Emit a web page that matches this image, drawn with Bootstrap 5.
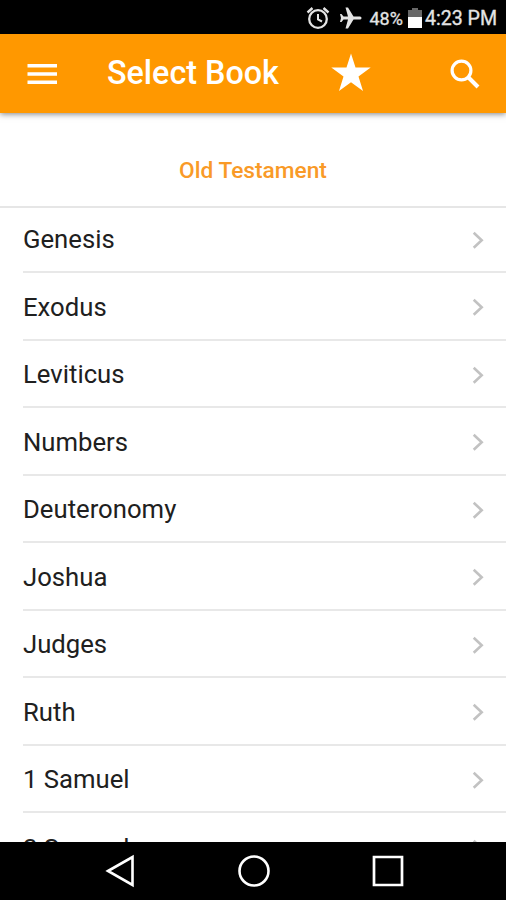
<!DOCTYPE html>
<html lang="en">
<head>
<meta charset="utf-8">
<meta name="viewport" content="width=device-width, initial-scale=1">
<title>Select Book</title>
<link href="https://cdn.jsdelivr.net/npm/bootstrap@5.3.0/dist/css/bootstrap.min.css" rel="stylesheet">
<style>
body{font-family:Roboto,"Liberation Sans",sans-serif;color:#202020;background:#fff}
svg{display:block;flex:none}
.screen{height:900px;width:506px}
.statusbar{height:34px;background:#000;color:#e4e4e4;padding:2px 9px 0 0;line-height:1}
.pct{font-size:18px;margin:1px 5px 0 7px;-webkit-text-stroke:.3px}
.clock{font-size:19.6px;margin:1px 0 0 3px;-webkit-text-stroke:.3px}
.appbar{height:79px;background:#ff9800;box-shadow:0 1px 6px rgba(0,0,0,.5);z-index:1;padding:0 26px 0 27px}
.appbar h1{font-size:32.3px;font-weight:500;margin:0 0 0 49px;width:224px;line-height:1}
.star{margin-top:-3px}
.section-head{height:95px;padding-top:24px;border-bottom:2px solid #e6e6e6;color:#f99a27;font-size:22.7px;font-weight:500}
.books{margin-top:-2.5px}
.books>.book{height:67.5px;margin-left:23px;padding:3px 21px 0 0;border:0;border-bottom:2px solid #e8e8e8;border-radius:0;font-size:25.7px;background:none;color:inherit}
.sysnav{height:58px;background:#000;padding:0 102px 0 105px}
</style>
<script src="https://cdn.jsdelivr.net/npm/bootstrap@5.3.0/dist/js/bootstrap.bundle.min.js"></script>
</head>
<body>
<svg class="d-none"><symbol id="chev" viewBox="0 0 13 18"><path d="M1.700 1.700 9.700 9.200 1.700 16.700" fill="none" stroke="#c2c2c2" stroke-width="2.600"/></symbol></svg>
<div class="screen d-flex flex-column overflow-hidden">
  <div class="statusbar d-flex align-items-center justify-content-end flex-shrink-0">
    <svg width="24" height="24" viewBox="0 0 24 24" fill="none" stroke="#e4e4e4"><circle cx="12" cy="13" r="8.800" stroke-width="2.300"/><path d="M1.500 6.500 6.500 2M22.500 6.500 17.500 2" stroke-width="2.400"/><path d="M12 8v5.500l4 2" stroke-width="2"/></svg>
    <svg class="ms-2" width="24" height="22" viewBox="0 0 24 22"><path d="M23.500 11c0-1-1-1.500-2-1.500h-6L10 .5H7.500l2.500 9H5.500L3.500 7H2l1 4-1 4h1.500l2-2.500H10l-2.500 9H10l5.500-9h6c1 0 2-.5 2-1.500z" fill="#e4e4e4"/></svg>
    <span class="pct">48%</span>
    <svg width="14" height="21" viewBox="0 0 14 21"><path d="M4 0h6v2h4v8H0V2h4z" fill="#686868"/><path d="M0 9h14v11H0z" fill="#fff"/></svg>
    <span class="clock">4:23 PM</span>
  </div>
  <nav class="appbar d-flex align-items-center text-white flex-shrink-0 position-relative">
    <svg width="31" height="22" viewBox="0 0 31 22"><path d="M.5 2.700h29.500M.5 11h29.500M.5 19.200h29.500" stroke="#fff" stroke-width="3.500"/></svg>
    <h1 class="text-nowrap">Select Book</h1>
    <svg class="star" width="40" height="40" viewBox="0 0 40 40"><path d="M20 1.500 24.500 15.500H39.700L27.500 24.500 32 39 20 30.200 8 39l4.500-14.500L.3 15.500h15.200z" fill="#fff"/></svg>
    <svg class="ms-auto" width="30" height="30" viewBox="0 0 30 30" fill="none" stroke="#fff"><circle cx="11.500" cy="11.500" r="9.400" stroke-width="3.200"/><path d="m18 18 10 10" stroke-width="4"/></svg>
  </nav>
  <div class="section-head d-flex align-items-center justify-content-center flex-shrink-0">Old Testament</div>
  <div class="books list-group list-group-flush flex-grow-1 overflow-hidden">
    <div class="book list-group-item d-flex align-items-center justify-content-between flex-shrink-0">Genesis<svg width="13" height="18"><use href="#chev"/></svg></div>
    <div class="book list-group-item d-flex align-items-center justify-content-between flex-shrink-0">Exodus<svg width="13" height="18"><use href="#chev"/></svg></div>
    <div class="book list-group-item d-flex align-items-center justify-content-between flex-shrink-0">Leviticus<svg width="13" height="18"><use href="#chev"/></svg></div>
    <div class="book list-group-item d-flex align-items-center justify-content-between flex-shrink-0">Numbers<svg width="13" height="18"><use href="#chev"/></svg></div>
    <div class="book list-group-item d-flex align-items-center justify-content-between flex-shrink-0">Deuteronomy<svg width="13" height="18"><use href="#chev"/></svg></div>
    <div class="book list-group-item d-flex align-items-center justify-content-between flex-shrink-0">Joshua<svg width="13" height="18"><use href="#chev"/></svg></div>
    <div class="book list-group-item d-flex align-items-center justify-content-between flex-shrink-0">Judges<svg width="13" height="18"><use href="#chev"/></svg></div>
    <div class="book list-group-item d-flex align-items-center justify-content-between flex-shrink-0">Ruth<svg width="13" height="18"><use href="#chev"/></svg></div>
    <div class="book list-group-item d-flex align-items-center justify-content-between flex-shrink-0">1 Samuel<svg width="13" height="18"><use href="#chev"/></svg></div>
    <div class="book list-group-item d-flex align-items-center justify-content-between flex-shrink-0">2 Samuel<svg width="13" height="18"><use href="#chev"/></svg></div>
  </div>
  <div class="sysnav d-flex align-items-center justify-content-between flex-shrink-0">
    <svg width="30" height="34" viewBox="0 0 30 34"><path d="M3 17 27.500 3v28z" fill="none" stroke="#fff" stroke-width="2.600"/></svg>
    <svg width="34" height="34" viewBox="0 0 34 34"><circle cx="17" cy="17" r="14.500" fill="none" stroke="#fff" stroke-width="2.600"/></svg>
    <svg width="32" height="32" viewBox="0 0 32 32"><path d="M2 2h28v28H2z" fill="none" stroke="#fff" stroke-width="2.700"/></svg>
  </div>
</div>
</body>
</html>
